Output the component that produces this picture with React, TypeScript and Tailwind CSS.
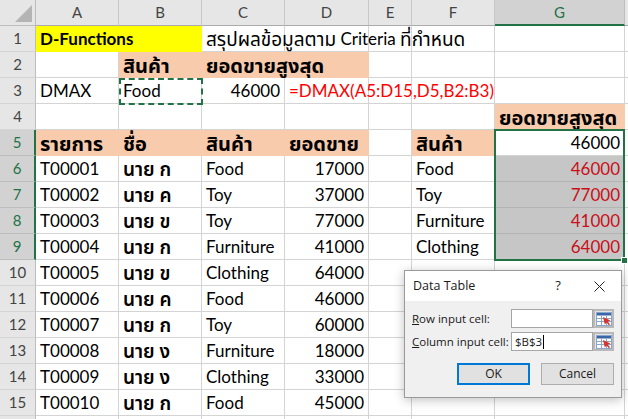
import React from 'react'

type C = { t?: React.ReactNode; cls?: string }

const W = ['w-[83px]', 'w-[83px]', 'w-[83px]', 'w-[84px]', 'w-[43px]', 'w-[83px]', 'w-[130px]']
const LETTERS = ['A', 'B', 'C', 'D', 'E', 'F', 'G']

const PEACH = 'bg-[#f8cbad] border-[#f8cbad] font-bold'
const SEL = 'bg-[#c6c6c6] border-[#b4b4b4] text-[#c8101a] justify-end'
const NUM = 'justify-end'

// Thai glyphs render narrower than in the source, so give them a bit more size
function Th({ children, bold }: { children: React.ReactNode; bold?: boolean }) {
  return <span className={bold ? 'text-[20px] font-bold' : 'text-[19px]'}>{children}</span>
}

const data: [string, string, string, string][] = [
  ['T00001', 'นาย ก', 'Food', '17000'],
  ['T00002', 'นาย ค', 'Toy', '37000'],
  ['T00003', 'นาย ข', 'Toy', '77000'],
  ['T00004', 'นาย ก', 'Furniture', '41000'],
  ['T00005', 'นาย ข', 'Clothing', '64000'],
  ['T00006', 'นาย ค', 'Food', '46000'],
  ['T00007', 'นาย ก', 'Toy', '60000'],
  ['T00008', 'นาย ง', 'Furniture', '18000'],
  ['T00009', 'นาย ง', 'Clothing', '33000'],
  ['T00010', 'นาย ก', 'Food', '45000'],
]

const lookup: [string, string][] = [
  ['Food', '46000'],
  ['Toy', '77000'],
  ['Furniture', '41000'],
  ['Clothing', '64000'],
]

const rows: C[][] = [
  [
    { t: 'D-Functions', cls: 'bg-[#ffff00] border-[#ffff00] font-bold relative z-10' },
    { cls: 'bg-[#ffff00] border-[#ffff00]' },
    {
      t: (
        <>
          <Th>สรุปผลข้อมูลตาม</Th>&nbsp;Criteria&nbsp;<Th>ที่กำหนด</Th>
        </>
      ),
      cls: 'relative z-10',
    },
    {}, {}, {}, {},
  ],
  [
    {},
    { t: <Th bold>สินค้า</Th>, cls: PEACH },
    { t: <Th bold>ยอดขายสูงสุด</Th>, cls: PEACH + ' relative z-10' },
    { cls: PEACH },
    {}, {}, {},
  ],
  [
    { t: 'DMAX' },
    { t: 'Food' },
    { t: '46000', cls: NUM },
    { t: '=DMAX(A5:D15,D5,B2:B3)', cls: 'text-[#ff0000] relative z-10' },
    {}, {}, {},
  ],
  [{}, {}, {}, {}, {}, {}, { t: <Th bold>ยอดขายสูงสุด</Th>, cls: PEACH }],
  [
    { t: <Th bold>รายการ</Th>, cls: PEACH },
    { t: <Th bold>ชื่อ</Th>, cls: PEACH },
    { t: <Th bold>สินค้า</Th>, cls: PEACH },
    { t: <Th bold>ยอดขาย</Th>, cls: PEACH },
    {},
    { t: <Th bold>สินค้า</Th>, cls: PEACH },
    { t: '46000', cls: NUM },
  ],
  ...data.map((d, i): C[] => [
    { t: d[0] },
    { t: <span className="text-[19px] font-semibold">{d[1]}</span> },
    { t: d[2] },
    { t: d[3], cls: NUM },
    {},
    lookup[i] ? { t: lookup[i][0] } : {},
    lookup[i] ? { t: lookup[i][1], cls: SEL } : {},
  ]),
  [{}, {}, {}, {}, {}, {}, {}],
]

function Corner() {
  return (
    <div className="w-[36px] h-[26px] shrink-0 bg-[#e6e6e6] border-r border-b border-[#bdbdbd] flex items-end justify-end pr-[3px] pb-[3px]">
      <svg width="17" height="17" viewBox="0 0 17 17">
        <path d="M17 0 L17 17 L0 17 Z" fill="#b4b4b4" />
      </svg>
    </div>
  )
}

function RowHead({ n }: { n: number }) {
  const active = n >= 5 && n <= 9
  return (
    <div
      className={
        active
          ? 'w-[36px] h-[26px] shrink-0 flex items-center justify-center text-[15px] bg-[#d2d2d2] text-[#217346] border-b border-b-[#bdbdbd] border-r-2 border-r-[#217346]'
          : 'w-[36px] h-[26px] shrink-0 flex items-center justify-center text-[15px] bg-[#e6e6e6] text-[#444] border-b border-b-[#d4d4d4] border-r border-r-[#bdbdbd]'
      }
    >
      {n < 16 ? n : null}
    </div>
  )
}

function RefIcon() {
  return (
    <svg width="16" height="14" viewBox="0 0 16 14">
      <rect x="0.5" y="0.5" width="15" height="13" fill="#fff" stroke="#8aa6cc" />
      <rect x="1" y="1" width="14" height="2.5" fill="#3a66a8" />
      <path d="M1 6.5H15M1 9.5H15M5.5 3.5V13.5M10.5 3.5V13.5" stroke="#8aa6cc" strokeWidth="1" />
      <path d="M7 5 L14.5 8.5 L11.8 9.6 L14 12.3 L12.8 13.3 L10.6 10.6 L8.8 12.6 Z" fill="#d7352b" />
    </svg>
  )
}

function Dialog() {
  return (
    <div className="absolute left-[404px] top-[270px] w-[218px] h-[128px] bg-[#f0f0f0] border border-[#9a9a9a] shadow-[0_2px_10px_rgba(0,0,0,0.25)] z-30 flex flex-col font-['Open_Sans','Noto_Sans',sans-serif] text-[11.5px] text-[#1a1a1a]">
      <div className="h-[30px] bg-white flex items-center pl-[8px]">
        <span className="flex-1 text-[12.5px]">Data Table</span>
        <span className="w-[20px] text-center text-[13px] mr-[26px]">?</span>
        <svg width="11" height="11" viewBox="0 0 11 11" className="mr-[16px]">
          <path d="M0.5 0.5L10.5 10.5M10.5 0.5L0.5 10.5" stroke="#222" strokeWidth="1" />
        </svg>
      </div>
      <div className="flex flex-col gap-[4px] pt-[8px] pl-[7px] pr-[7px]">
        <div className="flex items-center h-[19px]">
          <span className="flex-1">
            <span className="underline">R</span>ow input cell:
          </span>
          <div className="w-[82px] h-[19px] bg-white border border-[#a6a6a6]" />
          <div className="w-[21px] h-[19px] bg-[#e4e4e4] border-2 border-[#b9b9b9] flex items-center justify-center">
            <RefIcon />
          </div>
        </div>
        <div className="flex items-center h-[19px]">
          <span className="flex-1">
            <span className="underline">C</span>olumn input cell:
          </span>
          <div className="w-[82px] h-[19px] bg-white border border-[#a6a6a6] flex items-center pl-[3px] text-[11.5px]">
            $B$3<span className="w-px h-[14px] bg-black ml-px" />
          </div>
          <div className="w-[21px] h-[19px] bg-[#e4e4e4] border-2 border-[#b9b9b9] flex items-center justify-center">
            <RefIcon />
          </div>
        </div>
      </div>
      <div className="flex justify-end gap-[11px] mt-[12px] pr-[7px]">
        <button className="w-[73px] h-[22px] bg-[#e1e1e1] border-2 border-[#0078d7] text-[12px]">OK</button>
        <button className="w-[73px] h-[22px] bg-[#e1e1e1] border border-[#adadad] text-[12px]">Cancel</button>
      </div>
    </div>
  )
}

export default function App() {
  return (
    <div className="relative w-[628px] h-[419px] overflow-hidden bg-white font-['Lato','Noto_Sans_Thai','Noto_Sans',sans-serif] text-[17px] text-black">
      <div className="flex">
        <Corner />
        {LETTERS.map((l, i) => (
          <div
            key={l}
            className={
              l === 'G'
                ? W[i] + ' h-[26px] shrink-0 flex items-center justify-center text-[15px] bg-[#d2d2d2] text-[#217346] border-r border-r-[#bdbdbd] border-b-2 border-b-[#217346]'
                : W[i] + ' h-[26px] shrink-0 flex items-center justify-center text-[15px] bg-[#e6e6e6] text-[#444] border-r border-r-[#c8c8c8] border-b border-b-[#ababab]'
            }
          >
            {l}
          </div>
        ))}
        <div className="flex-1 h-[26px] bg-[#e6e6e6] border-b border-b-[#ababab]" />
      </div>
      {rows.map((r, ri) => (
        <div key={ri} className="flex">
          <RowHead n={ri + 1} />
          {r.map((c, ci) => (
            <div
              key={ci}
              className={
                W[ci] +
                ' h-[26px] shrink-0 flex items-center px-[4px] whitespace-nowrap leading-none border-r border-b ' +
                (c.cls && c.cls.includes('border-[') ? c.cls : 'border-[#d4d4d4] ' + (c.cls ?? ''))
              }
            >
              {c.t}
            </div>
          ))}
          <div className="flex-1 h-[26px] border-b border-[#d4d4d4]" />
        </div>
      ))}

      <div className="absolute left-[119px] top-[78px] w-[84px] h-[27px] border-2 border-dashed border-[#217346] z-20" />
      <div className="absolute left-[494px] top-[129px] w-[131px] h-[132px] border-2 border-[#217346] z-20" />
      <div className="absolute left-[621px] top-[257px] w-[7px] h-[7px] bg-[#217346] border border-white z-20" />

      <Dialog />
    </div>
  )
}
